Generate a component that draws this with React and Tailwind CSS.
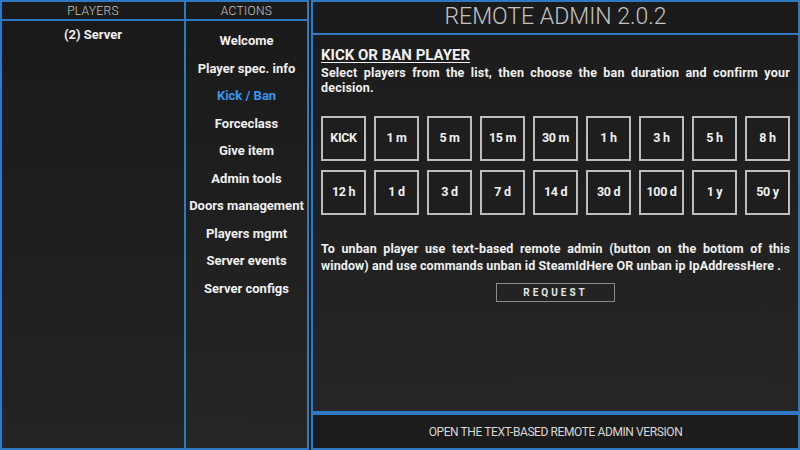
import React from 'react';

const actions = [
  "Welcome",
  "Player spec. info",
  "Kick / Ban",
  "Forceclass",
  "Give item",
  "Admin tools",
  "Doors management",
  "Players mgmt",
  "Server events",
  "Server configs",
];

const durations = [
  ["KICK", "1 m", "5 m", "15 m", "30 m", "1 h", "3 h", "5 h", "8 h"],
  ["12 h", "1 d", "3 d", "7 d", "14 d", "30 d", "100 d", "1 y", "50 y"],
];

export default function App() {
  return (
    <div
      className="w-[800px] h-[450px] bg-[#1d1d1d] text-white overflow-hidden grid grid-cols-[186px_124px_490px]"
      style={{ fontFamily: 'Roboto, "Liberation Sans", sans-serif' }}
    >
      {/* Players column */}
      <div className="flex flex-col h-[450px]">
        <div className="h-[21px] border-2 border-[#2f78c2] bg-[#1b1b1b] flex items-center justify-center pt-[1px] text-[12px] font-light text-[#c9c9c9] tracking-wide">
          PLAYERS
        </div>
        <div className="flex-1 border-2 border-t-0 border-[#2f78c2] bg-gradient-to-b from-[#1a1a1a] to-[#242424] pt-[4px] text-center">
          <div className="text-[13px] font-bold text-[#f0f0f0]">(2) Server</div>
        </div>
      </div>

      {/* Actions column */}
      <div className="flex flex-col h-[450px] pr-[1px]">
        <div className="h-[21px] border-2 border-l-0 border-[#2f78c2] bg-[#1b1b1b] flex items-center justify-center pt-[1px] text-[12px] font-light text-[#c9c9c9] tracking-wide">
          ACTIONS
        </div>
        <div className="flex-1 border-2 border-t-0 border-l-0 border-[#2f78c2] bg-gradient-to-b from-[#1a1a1a] to-[#262626] pt-[10px] flex flex-col items-center">
          {actions.map((a) => (
            <div
              key={a}
              className={`h-[27.5px] leading-[19px] text-[13px] font-bold ${a === "Kick / Ban" ? "text-[#3a96ee]" : "text-[#f0f0f0]"}`}
            >
              {a}
            </div>
          ))}
        </div>
      </div>

      {/* Main panel */}
      <div className="flex flex-col h-[450px] pl-[1px]">
        <div className="h-[35px] border-2 border-[#2f78c2] bg-[#1b1b1b] flex items-center justify-center text-[23px] font-light text-[#c4c4c4]">
          REMOTE ADMIN 2.0.2
        </div>
        <div className="flex-1 border-2 border-t-0 border-[#2f78c2] bg-gradient-to-b from-[#1c1c1c] to-[#262626] px-[8px] pt-[10px]">
          <div className="text-[15px] font-bold underline underline-offset-2 text-[#f2f2f2] leading-[20px]">
            KICK OR BAN PLAYER
          </div>
          <p className="text-[12.5px] font-bold text-[#f0f0f0] leading-[15px] text-justify tracking-[0.2px]">
            Select players from the list, then choose the ban duration and confirm your decision.
          </p>
          <div className="mt-[21px] flex flex-col gap-[9px]">
            {durations.map((row, i) => (
              <div key={i} className="flex justify-between">
                {row.map((d) => (
                  <div
                    key={d}
                    className="w-[45px] h-[45px] border-2 border-[#bdbdbd] bg-[#1e1e1e] flex items-center justify-center text-[12.5px] font-bold text-[#f0f0f0] tracking-tight"
                  >
                    {d}
                  </div>
                ))}
              </div>
            ))}
          </div>
          <p className="mt-[25px] text-[12.5px] font-bold text-[#f0f0f0] leading-[17px] text-justify tracking-[0.1px]">
            To unban player use text-based remote admin (button on the bottom of this window) and use commands unban id SteamIdHere OR unban ip IpAddressHere .
          </p>
          <div className="flex justify-center mt-[9px]">
            <div className="w-[119px] h-[19px] border border-[#8a8a8a] flex items-center justify-center text-[10px] font-bold tracking-[3px] text-[#e6e6e6]">
              REQUEST
            </div>
          </div>
        </div>
        <div className="h-[37px] border-2 border-[#2f78c2] bg-[#1c1c1c] flex items-center justify-center text-[12px] text-[#d8d8d8] tracking-[-0.4px]">
          OPEN THE TEXT-BASED REMOTE ADMIN VERSION
        </div>
      </div>
    </div>
  );
}
